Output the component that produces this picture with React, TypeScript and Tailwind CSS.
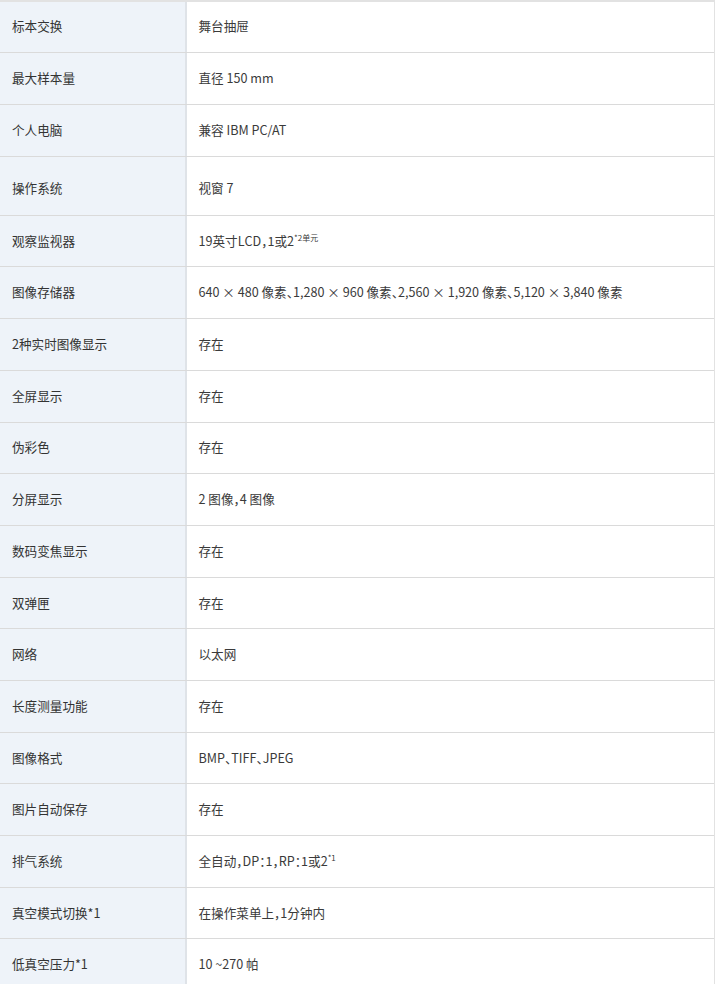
const rows: [string, React.ReactNode][] = [
  ['标本交换', '舞台抽屉'],
  ['最大样本量', '直径 150 mm'],
  ['个人电脑', '兼容 IBM PC/AT'],
  ['操作系统', '视窗 7'],
  [
    '观察监视器',
    <>
      19英寸LCD，1或2<sup className="relative -top-[3px] text-[8px]">*2单元</sup>
    </>,
  ],
  ['图像存储器', '640 × 480 像素、1,280 × 960 像素、2,560 × 1,920 像素、5,120 × 3,840 像素'],
  ['2种实时图像显示', '存在'],
  ['全屏显示', '存在'],
  ['伪彩色', '存在'],
  ['分屏显示', '2 图像，4 图像'],
  ['数码变焦显示', '存在'],
  ['双弹匣', '存在'],
  ['网络', '以太网'],
  ['长度测量功能', '存在'],
  ['图像格式', 'BMP、TIFF、JPEG'],
  ['图片自动保存', '存在'],
  [
    '排气系统',
    <>
      全自动，DP：1，RP：1或2<sup className="relative -top-[3px] text-[8px]">*1</sup>
    </>,
  ],
  ['真空模式切换*1', '在操作菜单上，1分钟内'],
  ['低真空压力*1', '10 ~270 帕'],
];

const heights = ['h-[50.5px]', 'h-[52px]', 'h-[52px]', 'h-[59.3px]'];

export default function App() {
  return (
    <div
      className="w-[716px] bg-white text-[12.6px] text-[#333] [font-feature-settings:'halt']"
      style={{ fontFamily: '"Noto Sans CJK SC", "Noto Sans", sans-serif' }}
    >
      <div className="w-[715px] border-t-2 border-r border-[#e2e2e2]">
        {rows.map(([label, value], i) => {
          const pad = i === 3 ? 'pt-[6px]' : '';
          return (
            <div
              key={i}
              className={`flex border-b border-[#dadada] ${heights[i] ?? 'h-[51.7px]'}`}
            >
              <div className={`flex w-[185px] shrink-0 items-center bg-[#eef3f9] pl-3 ${pad}`}>{label}</div>
              <div className="w-[1.5px] shrink-0 bg-[#dfe3e8]" />
              <div className={`flex flex-1 items-center pl-3 text-[#3a3a3a] ${pad}`}>{value}</div>
            </div>
          );
        })}
      </div>
    </div>
  );
}
